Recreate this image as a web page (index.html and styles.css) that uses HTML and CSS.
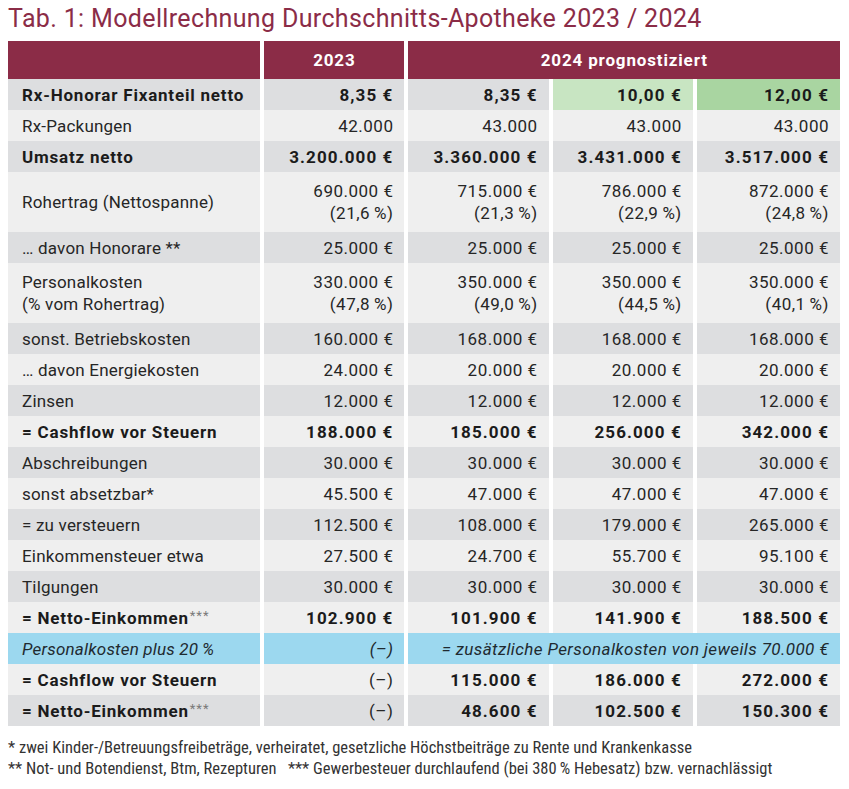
FILE: index.html
```html
<!DOCTYPE html>
<html lang="de">
<head>
<meta charset="utf-8">
<title>Tab. 1: Modellrechnung Durchschnitts-Apotheke 2023 / 2024</title>
<link rel="stylesheet" href="styles.css">
</head>
<body>
<div class="page">
  <h1 class="title">Tab. 1: Modellrechnung Durchschnitts-Apotheke 2023 / 2024</h1>
  <table class="calc">
    <colgroup>
      <col class="c-label"><col class="c-num"><col class="c-num"><col class="c-num"><col class="c-num5">
    </colgroup>
    <thead>
      <tr class="head">
        <th></th>
        <th>2023</th>
        <th colspan="3">2024 prognostiziert</th>
      </tr>
    </thead>
    <tbody>
      <tr class="dark strong">
        <td>Rx-Honorar Fixanteil netto</td><td>8,35 €</td><td>8,35 €</td><td class="green-l">10,00 €</td><td class="green-d">12,00 €</td>
      </tr>
      <tr class="light">
        <td>Rx-Packungen</td><td>42.000</td><td>43.000</td><td>43.000</td><td>43.000</td>
      </tr>
      <tr class="dark strong">
        <td>Umsatz netto</td><td>3.200.000 €</td><td>3.360.000 €</td><td>3.431.000 €</td><td>3.517.000 €</td>
      </tr>
      <tr class="light double">
        <td>Rohertrag (Nettospanne)</td><td>690.000 €<br>(21,6&#8201;%)</td><td>715.000 €<br>(21,3&#8201;%)</td><td>786.000 €<br>(22,9&#8201;%)</td><td>872.000 €<br>(24,8&#8201;%)</td>
      </tr>
      <tr class="dark">
        <td>… davon Honorare **</td><td>25.000 €</td><td>25.000 €</td><td>25.000 €</td><td>25.000 €</td>
      </tr>
      <tr class="light double">
        <td>Personalkosten<br>(% vom Rohertrag)</td><td>330.000 €<br>(47,8&#8201;%)</td><td>350.000 €<br>(49,0&#8201;%)</td><td>350.000 €<br>(44,5&#8201;%)</td><td>350.000 €<br>(40,1&#8201;%)</td>
      </tr>
      <tr class="dark">
        <td>sonst. Betriebskosten</td><td>160.000 €</td><td>168.000 €</td><td>168.000 €</td><td>168.000 €</td>
      </tr>
      <tr class="light">
        <td>… davon Energiekosten</td><td>24.000 €</td><td>20.000 €</td><td>20.000 €</td><td>20.000 €</td>
      </tr>
      <tr class="dark">
        <td>Zinsen</td><td>12.000 €</td><td>12.000 €</td><td>12.000 €</td><td>12.000 €</td>
      </tr>
      <tr class="light strong">
        <td>= Cashflow vor Steuern</td><td>188.000 €</td><td>185.000 €</td><td>256.000 €</td><td>342.000 €</td>
      </tr>
      <tr class="dark">
        <td>Abschreibungen</td><td>30.000 €</td><td>30.000 €</td><td>30.000 €</td><td>30.000 €</td>
      </tr>
      <tr class="light">
        <td>sonst absetzbar*</td><td>45.500 €</td><td>47.000 €</td><td>47.000 €</td><td>47.000 €</td>
      </tr>
      <tr class="dark">
        <td>= zu versteuern</td><td>112.500 €</td><td>108.000 €</td><td>179.000 €</td><td>265.000 €</td>
      </tr>
      <tr class="light">
        <td>Einkommensteuer etwa</td><td>27.500 €</td><td>24.700 €</td><td>55.700 €</td><td>95.100 €</td>
      </tr>
      <tr class="dark">
        <td>Tilgungen</td><td>30.000 €</td><td>30.000 €</td><td>30.000 €</td><td>30.000 €</td>
      </tr>
      <tr class="light strong">
        <td>= Netto-Einkommen<span class="stars">***</span></td><td>102.900 €</td><td>101.900 €</td><td>141.900 €</td><td>188.500 €</td>
      </tr>
      <tr class="blue">
        <td>Personalkosten plus 20&#8201;%</td><td>(–)</td><td colspan="3" class="wide">= zusätzliche Personalkosten von jeweils 70.000 €</td>
      </tr>
      <tr class="light strong">
        <td>= Cashflow vor Steuern</td><td class="plain">(–)</td><td>115.000 €</td><td>186.000 €</td><td>272.000 €</td>
      </tr>
      <tr class="dark strong">
        <td>= Netto-Einkommen<span class="stars">***</span></td><td class="plain">(–)</td><td>48.600 €</td><td>102.500 €</td><td>150.300 €</td>
      </tr>
    </tbody>
  </table>
  <div class="notes">
    <p class="note">* zwei Kinder-/Betreuungsfreibeträge, verheiratet, gesetzliche Höchstbeiträge zu Rente und Krankenkasse</p>
    <p class="note">** Not- und Botendienst, Btm, Rezepturen &nbsp;&nbsp;*** Gewerbesteuer durchlaufend (bei 380&#8201;% Hebesatz) bzw. vernachlässigt</p>
  </div>
</div>
</body>
</html>
```

FILE: styles.css
```css
html, body {
  margin: 0;
  padding: 0;
  background: #ffffff;
}

.page {
  padding: 5px 9px 0 8px;
  font-family: Roboto, "Liberation Sans", sans-serif;
  color: #262626;
}

.title {
  margin: 0 0 8px 0;
  font-size: 25px;
  line-height: 28px;
  font-weight: 400;
  letter-spacing: 0.35px;
  color: #8b2c47;
  white-space: nowrap;
}

.calc {
  border-collapse: separate;
  border-spacing: 4px 0;
  margin: 0 -4px;
  table-layout: fixed;
  width: 840px;
  font-size: 17px;
}

.c-label { width: 252px; }
.c-num { width: 140px; }
.c-num5 { width: 143px; }

.calc th,
.calc td {
  padding: 0 11px 0 14px;
  text-align: right;
  white-space: nowrap;
  vertical-align: middle;
  letter-spacing: 0.5px;
}

.calc td:first-child,
.calc th:first-child {
  text-align: left;
  letter-spacing: 0.2px;
}

.head th {
  height: 38px;
  background: #8b2c47;
  color: #ffffff;
  font-weight: 700;
  text-align: center;
  padding: 0;
  letter-spacing: 0.85px;
}

.head th:first-child {
  text-align: center;
}

.calc tbody tr {
  height: 31px;
}

.calc tbody tr.double {
  height: 60px;
}

.double td {
  line-height: 22px;
}

.dark td { background: #dddee0; }
.light td { background: #efefef; }

.strong td {
  font-weight: 700;
  color: #1b1b1b;
  letter-spacing: 1.1px;
}

.calc .strong td:first-child {
  letter-spacing: 0.8px;
}

.strong td.plain {
  font-weight: 400;
  color: #262626;
  letter-spacing: 0.5px;
}

.calc td.green-l { background: #c8e5c2; }
.calc td.green-d { background: #a9d5a1; }

.blue td {
  background: #9cd8ef;
  font-style: italic;
  color: #1f2a30;
}

.calc .blue td.wide {
  letter-spacing: 0.4px;
}

.stars {
  font-weight: 400;
  color: #7a7a7a;
  font-size: 13px;
  vertical-align: 4px;
  letter-spacing: 1px;
  margin-left: 1px;
}

.notes {
  margin-top: 11px;
}

.note {
  margin: 0;
  font-family: Roboto, sans-serif;
  font-stretch: condensed;
  font-size: 16.5px;
  line-height: 21px;
  color: #333333;
  white-space: nowrap;
}
```
